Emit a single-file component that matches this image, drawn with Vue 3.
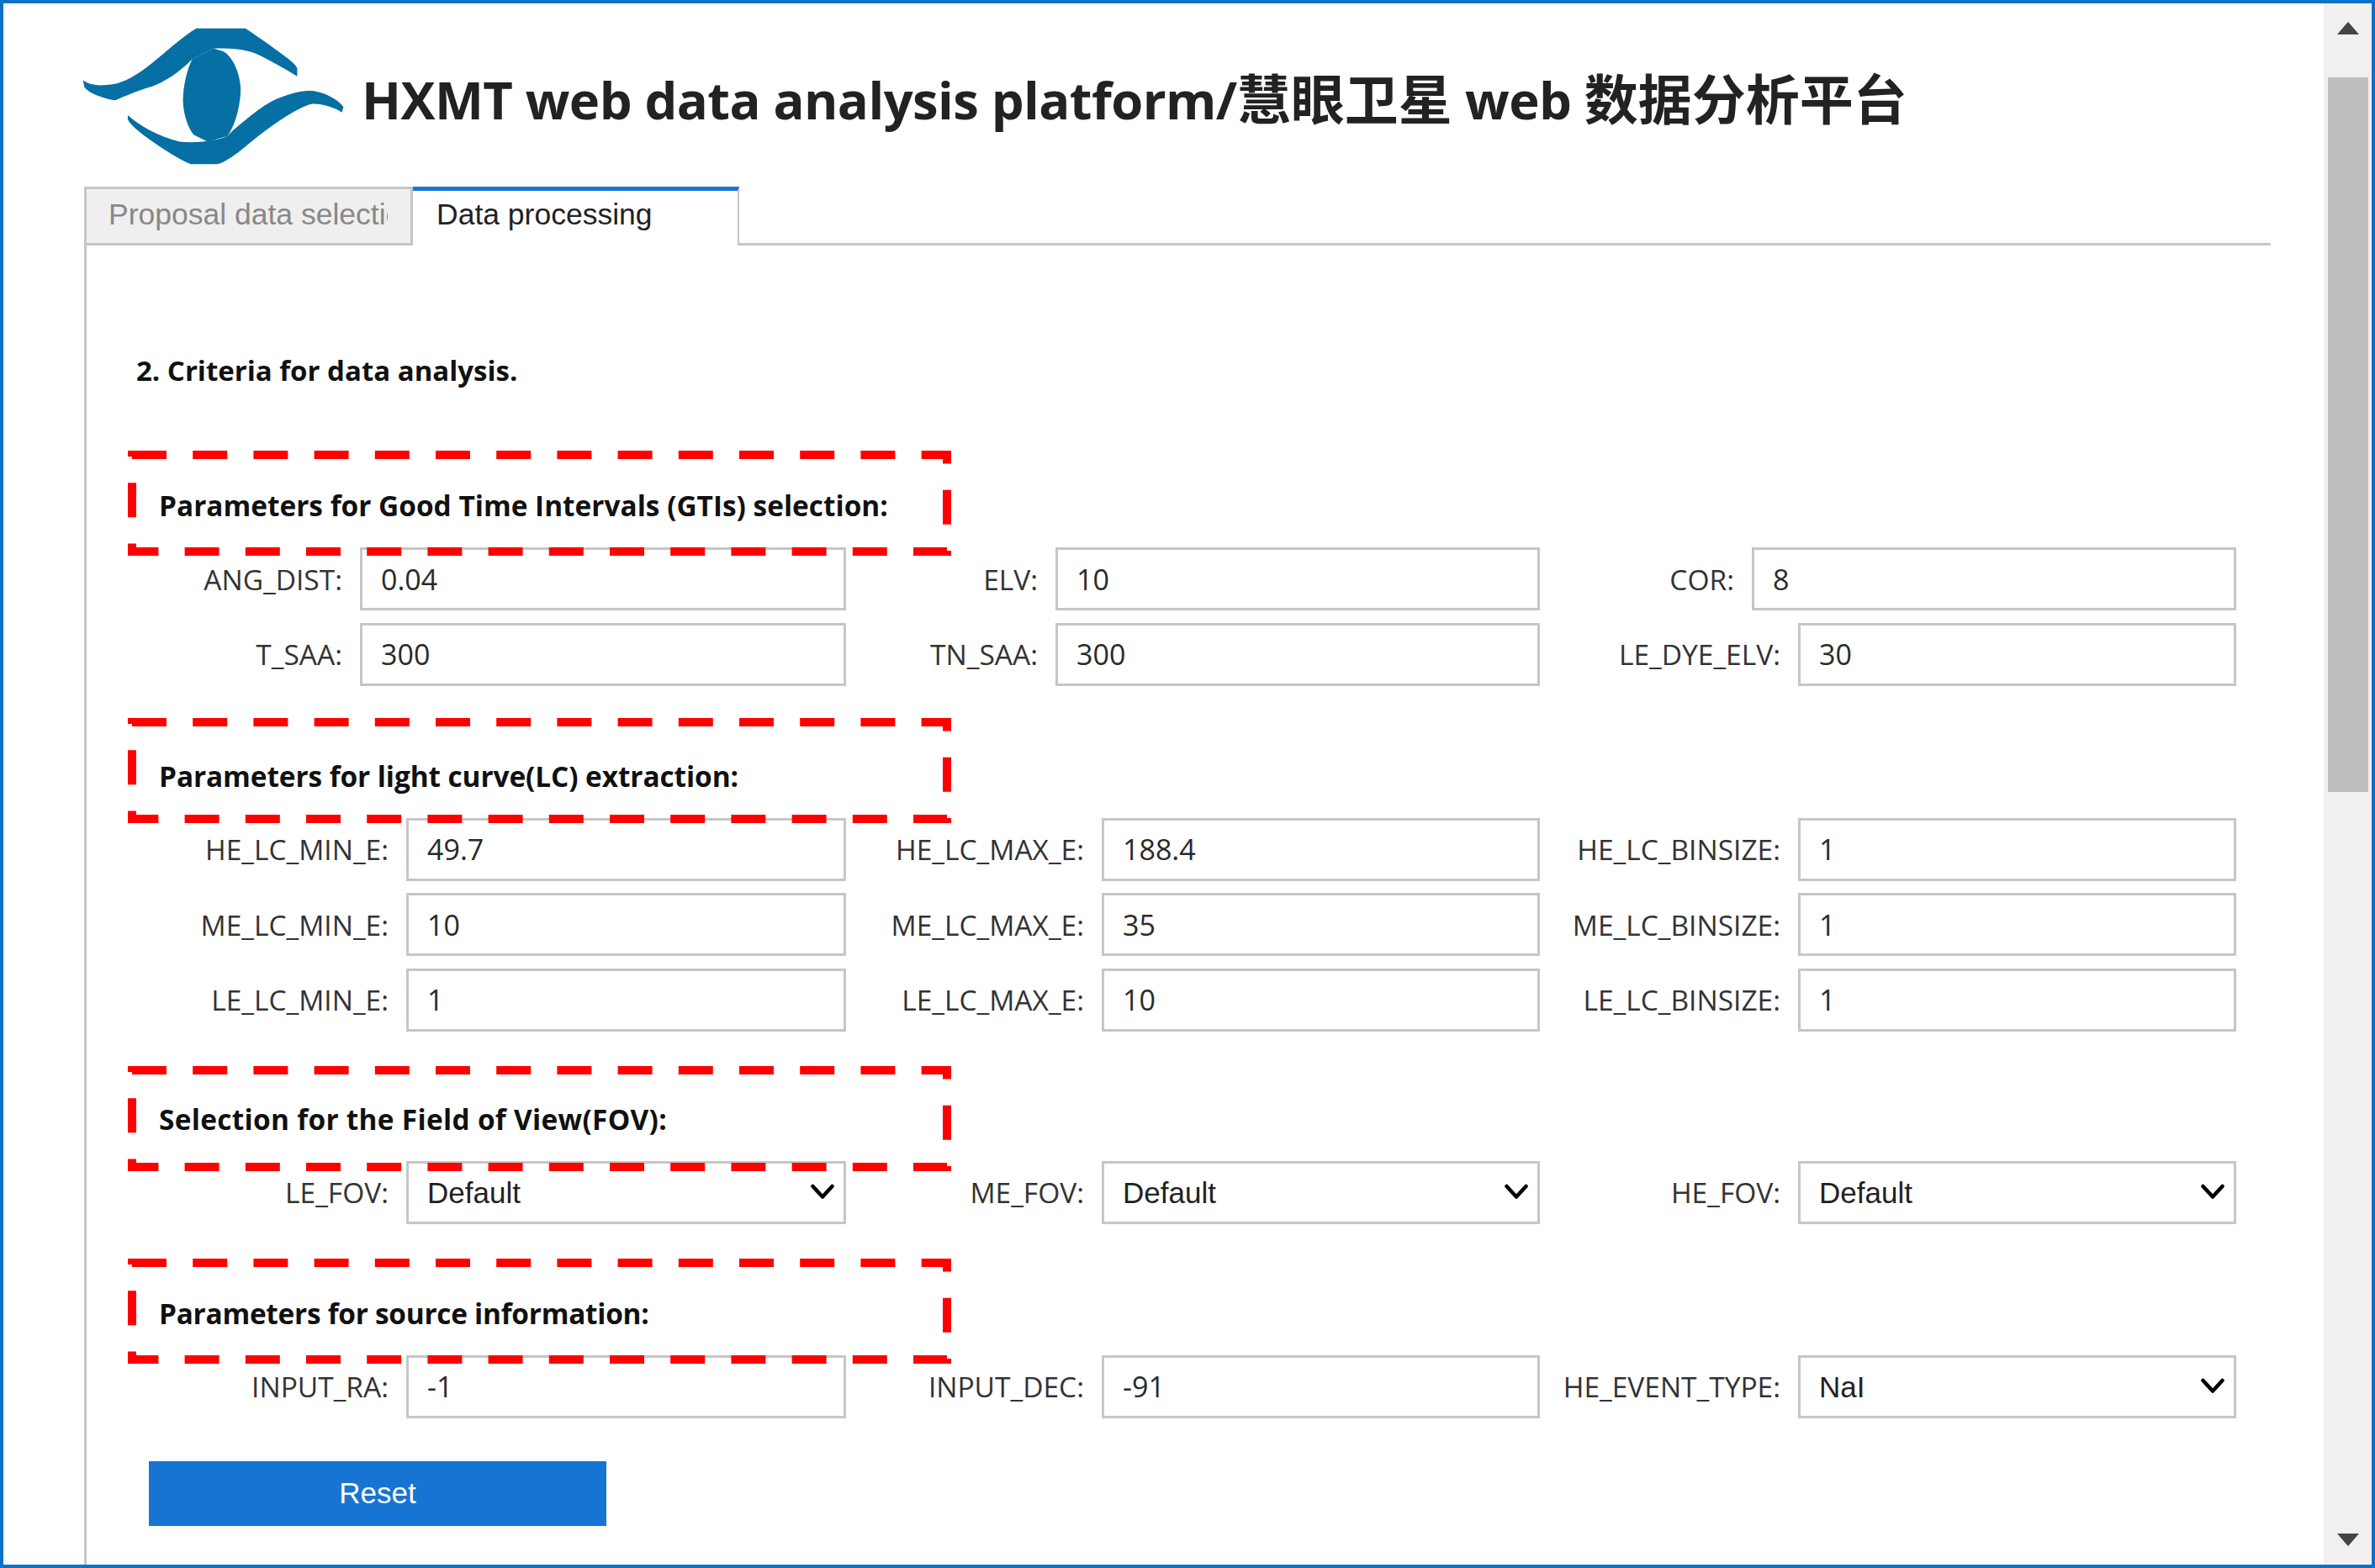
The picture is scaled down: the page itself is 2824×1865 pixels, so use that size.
<script setup>
import { ref } from 'vue';

const activeTab = ref(1);
const tabs = ['Proposal data selection', 'Data processing'];

const sections = ref([
    {
        title: 'Parameters for Good Time Intervals (GTIs) selection:',
        cls: 'gti',
        rows: [
            [
                { label: 'ANG_DIST:', value: '0.04', wide: true },
                { label: 'ELV:', value: '10', wide: true },
                { label: 'COR:', value: '8', wide: true },
            ],
            [
                { label: 'T_SAA:', value: '300', wide: true },
                { label: 'TN_SAA:', value: '300', wide: true },
                { label: 'LE_DYE_ELV:', value: '30' },
            ],
        ],
    },
    {
        title: 'Parameters for light curve(LC) extraction:',
        cls: 'lc',
        rows: [
            [
                { label: 'HE_LC_MIN_E:', value: '49.7' },
                { label: 'HE_LC_MAX_E:', value: '188.4' },
                { label: 'HE_LC_BINSIZE:', value: '1' },
            ],
            [
                { label: 'ME_LC_MIN_E:', value: '10' },
                { label: 'ME_LC_MAX_E:', value: '35' },
                { label: 'ME_LC_BINSIZE:', value: '1' },
            ],
            [
                { label: 'LE_LC_MIN_E:', value: '1' },
                { label: 'LE_LC_MAX_E:', value: '10' },
                { label: 'LE_LC_BINSIZE:', value: '1' },
            ],
        ],
    },
    {
        title: 'Selection for the Field of View(FOV):',
        cls: 'fov',
        rows: [
            [
                { label: 'LE_FOV:', value: 'Default', options: ['Default'] },
                { label: 'ME_FOV:', value: 'Default', options: ['Default'] },
                { label: 'HE_FOV:', value: 'Default', options: ['Default'] },
            ],
        ],
    },
    {
        title: 'Parameters for source information:',
        cls: 'source',
        rows: [
            [
                { label: 'INPUT_RA:', value: '-1' },
                { label: 'INPUT_DEC:', value: '-91' },
                { label: 'HE_EVENT_TYPE:', value: 'NaI', options: ['NaI'] },
            ],
        ],
    },
]);
</script>

<template>
    <div class="frame">
        <div class="content">
            <header class="header">
                <svg class="logo" viewBox="50 35 940 495">
                    <path d="M55 225 C75 240 100 248 160 240 C205 232 250 205 300 165 C350 125 410 70 460 40 L635 40 C680 70 730 105 770 135 C795 152 815 170 820 182 L820 212 C790 190 740 165 690 138 C660 122 610 108 520 112 L445 150 C400 195 350 230 300 248 C250 262 210 280 170 297 C130 290 80 275 60 250 Z" />
                    <path d="M445 150 C425 190 412 250 412 300 C414 350 430 395 450 420 L500 445 L570 425 C595 395 618 320 618 255 C615 200 590 140 555 122 L520 112 Z" />
                    <path d="M215 350 C255 385 320 425 400 445 C450 450 520 445 570 425 L590 405 C650 355 710 300 770 283 C810 268 850 260 880 264 C925 272 965 295 985 320 L980 340 C950 322 910 308 870 310 C830 320 760 365 700 410 C660 440 620 475 600 490 C570 510 550 525 530 525 L440 525 C400 510 340 470 290 435 C250 405 225 385 215 365 Z" />
                </svg>
                <h1 class="title">HXMT web data analysis platform/<span class="cjk">慧眼卫星</span> web <span class="cjk">数据分析平台</span></h1>
            </header>

            <nav class="tabs">
                <button
                    v-for="(tab, index) in tabs"
                    :key="tab"
                    class="tab"
                    :class="{ active: activeTab === index }"
                    @click="activeTab = index"
                >
                    <span class="tabText">{{ tab }}</span>
                </button>
            </nav>

            <main class="panel">
                <h2 class="criteria">2. Criteria for data analysis.</h2>

                <section v-for="section in sections" :key="section.title" class="group" :class="section.cls">
                    <div class="groupHead">
                        <h3>{{ section.title }}</h3>
                        <svg class="dashBox" width="979" height="125">
                            <rect x="5" y="5" width="969" height="115" fill="none" stroke="#ff0000" stroke-width="10" stroke-dasharray="41 31.2" />
                        </svg>
                    </div>
                    <div class="rows">
                        <div v-for="(row, r) in section.rows" :key="r" class="row">
                            <label v-for="field in row" :key="field.label" class="field">
                                <span class="label">{{ field.label }}</span>
                                <span v-if="field.options" class="selectBox">
                                    <select v-model="field.value">
                                        <option v-for="opt in field.options" :key="opt">{{ opt }}</option>
                                    </select>
                                    <svg class="chevron" width="28" height="19" viewBox="0 0 28 19">
                                        <path d="M2.5 3 L14 15.5 L25.5 3" fill="none" stroke="#000" stroke-width="4.5" stroke-linecap="round" stroke-linejoin="round" />
                                    </svg>
                                </span>
                                <input v-else v-model="field.value" type="text" :class="{ wide: field.wide }" />
                            </label>
                        </div>
                    </div>
                </section>

                <button class="reset">Reset</button>
            </main>
        </div>

        <aside class="scrollbar">
            <span class="arrowUp"></span>
            <span class="thumb"></span>
            <span class="arrowDown"></span>
        </aside>
    </div>
</template>

<style scoped>
    .frame {
        width: 2824px;
        height: 1865px;
        box-sizing: border-box;
        border: 4px solid #0a72c8;
        display: flex;
        overflow: hidden;
        background: #fff;
    }
    .content {
        width: 2759px;
        box-sizing: border-box;
        padding: 28px 63px 0 93px;
        display: flex;
        flex-direction: column;
    }
    .header {
        height: 165px;
        display: flex;
        align-items: center;
        gap: 20px;
    }
    .logo {
        width: 313px;
        height: 165px;
        fill: #066fa3;
        flex: none;
    }
    .title {
        margin: 0;
        font: 700 61.5px "Open Sans", "Noto Sans CJK SC", sans-serif;
        letter-spacing: -0.57px;
        color: #222;
        white-space: nowrap;
    }
    .cjk {
        font-size: 64px;
        letter-spacing: 0;
    }
    .tabs {
        margin: 25px 0 0 3px;
        height: 67px;
        display: flex;
        border-bottom: 3px solid #c6c6c6;
    }
    .tab {
        box-sizing: border-box;
        width: 391px;
        height: 67px;
        padding: 0 27px 3px 26px;
        background: #efefef;
        border: 3px solid #c6c6c6;
        border-bottom: 0;
        font: 35.5px "Liberation Sans", Arial, sans-serif;
        color: #888;
        text-align: left;
    }
    .tabText {
        display: block;
        overflow: hidden;
        white-space: nowrap;
    }
    .tab.active {
        width: 388px;
        padding: 0 30px 8px 28px;
        background: #fff;
        color: #222;
        border-width: 0 2px 0 0;
        border-top: 5px solid #1976d2;
        height: 70px;
        margin-bottom: -3px;
    }
    .panel {
        flex: 1;
        margin-left: 3px;
        padding: 127px 0 0 49px;
        border-left: 3px solid #c6c6c6;
    }
    .criteria {
        margin: 0 0 73px 10px;
        font: 700 33px/44px "Open Sans", "Noto Sans CJK SC", sans-serif;
        color: #111;
    }
    .group.lc { margin-top: 42px; }
    .group.fov { margin-top: 39px; }
    .group.source { margin-top: 41px; }
    .groupHead {
        position: relative;
        height: 115px;
    }
    .groupHead h3 {
        margin: 0;
        padding: 43px 0 0 37px;
        font: 700 33.4px/44px "Open Sans", "Noto Sans CJK SC", sans-serif;
        color: #111;
    }
    .lc h3 { letter-spacing: -0.09px; }
    .fov h3 { letter-spacing: 0.3px; }
    .source h3 { letter-spacing: -0.27px; }
    .dashBox {
        position: absolute;
        left: 0;
        top: 0;
        z-index: 2;
    }
    .lc .dashBox { top: -4px; }
    .fov .dashBox { top: 2px; }
    .rows {
        display: flex;
        flex-direction: column;
        gap: 14.5px;
    }
    .row {
        display: grid;
        grid-template-columns: 854px 825px 828px;
    }
    .field {
        display: flex;
        justify-content: flex-end;
        align-items: center;
        gap: 21px;
        height: 75px;
    }
    .label {
        font: 400 33.5px "Open Sans", sans-serif;
        color: #333;
        white-space: nowrap;
    }
    input, .selectBox {
        box-sizing: border-box;
        width: 521px;
        height: 75px;
        flex: none;
    }
    input {
        padding: 0 22px;
        border: 3px solid #c6c6c6;
        font: 400 34px "Open Sans", sans-serif;
        color: #2a2a2a;
        outline: none;
    }
    input.wide { width: 576px; }
    .field:first-child input, .field:first-child .selectBox { width: 523px; }
    .field:first-child input.wide { width: 578px; }
    .selectBox {
        position: relative;
        display: block;
    }
    select {
        box-sizing: border-box;
        width: 100%;
        height: 100%;
        padding: 0 22px;
        appearance: none;
        background: #fff;
        border: 3px solid #c6c6c6;
        border-radius: 0;
        font: 35px "Liberation Sans", Arial, sans-serif;
        color: #222;
        outline: none;
    }
    .chevron {
        position: absolute;
        right: 14px;
        top: 27px;
        pointer-events: none;
    }
    .reset {
        display: block;
        width: 544px;
        height: 77px;
        margin: 51px 0 0 25px;
        background: #1874d2;
        border: 0;
        color: #fff;
        font: 35px "Liberation Sans", Arial, sans-serif;
    }
    .scrollbar {
        width: 57px;
        background: #f0f0f0;
        display: flex;
        flex-direction: column;
        align-items: center;
    }
    .arrowUp {
        width: 0;
        height: 0;
        margin-top: 22px;
        border-left: 13px solid transparent;
        border-right: 13px solid transparent;
        border-bottom: 15px solid #444;
    }
    .thumb {
        width: 48px;
        height: 850px;
        margin-top: 51px;
        background: #bebebe;
    }
    .arrowDown {
        width: 0;
        height: 0;
        margin-top: auto;
        margin-bottom: 22px;
        border-left: 13px solid transparent;
        border-right: 13px solid transparent;
        border-top: 15px solid #444;
    }
</style>

<style>
    html, body {
        margin: 0;
        overflow: hidden;
    }
</style>
